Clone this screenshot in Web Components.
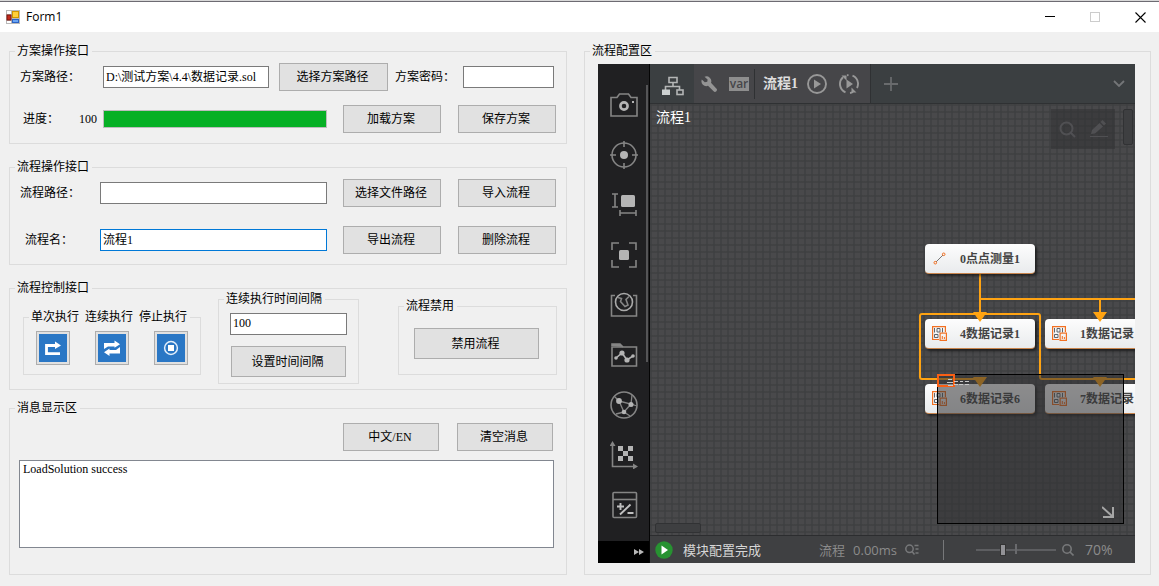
<!DOCTYPE html>
<html lang="zh-CN">
<head>
<meta charset="utf-8">
<title>Form1</title>
<style>
  html, body { margin: 0; min-height: 100%; }
  body {
    background: #f0f0f0; color: #000;
    font: 12px/14px "Liberation Serif", "Noto Sans CJK SC", serif;
  }
</style>
</head>
<body>
<app-window></app-window>

<script>
const controls = `
  *, *::before, *::after { box-sizing: border-box; }
  button, input, textarea { font: inherit; color: inherit; margin: 0; border-radius: 0; outline: 0; }
  button.win { height: 28px; padding: 0 2px 0 0; border: 1px solid #adadad; background: #e1e1e1; flex: none; white-space: nowrap; }
  button.win.tall { height: 31px; }
  input.box { height: 22px; min-width: 0; padding: 0 2px 2px; border: 1px solid #7a7a7a; background: #fff; }
  input.box.active { border-color: #0078d7; }
  .row { display: flex; align-items: center; }
  .grow { flex: 1; }
  .w98 { width: 98px; }
  label { flex: none; white-space: nowrap; }
  svg { display: block; }
`;

function define(name, css, html) {
  const tpl = document.createElement('template');
  tpl.innerHTML = `<style>${controls}${css}</style>${html}`;
  customElements.define(name, class extends HTMLElement {
    constructor() {
      super();
      this.attachShadow({ mode: 'open' }).append(tpl.content.cloneNode(true));
    }
  });
}

/* Titled frame */
define('group-box', `
  :host { display: flex; flex-direction: column; }
  fieldset { flex: 1; min-width: 0; margin: 0; padding: 0; border: 1px solid #dcdcdc; }
  legend { margin-left: 5px; padding: 0 3px 0 2px; line-height: 14px; white-space: nowrap; }
`, `<fieldset><legend><slot name="title"></slot></legend><slot></slot></fieldset>`);

define('title-bar', `
  :host { display: flex; align-items: center; height: 30px; background: #fff; padding-left: 6px;
          font-family: "Open Sans", "Noto Sans", sans-serif; }
  h1 { margin: 0 auto 0 6px; font-size: 12px; font-weight: 400; line-height: 16px; }
  button { width: 45px; height: 30px; padding: 0; border: 0; background: none; display: grid; place-items: center; }
  button.close { width: 38px; margin-left: 4px; }
`, `
  <svg width="14" height="14" viewBox="0 0 14 14"><rect width="14" height="14" fill="#b9b9b9"/><rect x="1" y="1" width="4" height="3" fill="#fff"/><rect x="1" y="11" width="4" height="2" fill="#fff"/><rect x="1" y="5" width="4" height="5" fill="#c22a1c" stroke="#7d150c"/><rect x="6.500" y="1.500" width="6" height="6" fill="#ffcf3b" stroke="#d09500"/><rect x="6.500" y="9.500" width="6" height="3" fill="#6aa5f4" stroke="#2c62c4"/></svg>
  <h1>Form1</h1>
  <button aria-label="最小化"><svg width="10" height="10"><path d="M0 4.500H10" stroke="#000"/></svg></button>
  <button aria-label="最大化" disabled><svg width="10" height="10"><rect x=".5" y=".5" width="9" height="9" fill="none" stroke="#ccc"/></svg></button>
  <button class="close" aria-label="关闭"><svg width="11" height="11"><path d="M.5 .5l10 10M10.500 .5l-10 10" stroke="#000" stroke-width="1.100"/></svg></button>
`);

define('solution-panel', `
  :host { display: block; }
  .rows { display: flex; flex-direction: column; gap: 14px; padding: 5px 10px 10px; }
  .path label:first-child { width: 83px; }
  .path .win { width: 109px; margin: 0 7px 0 10px; }
  .path .pwd { width: 68px; }
  .path .short { width: 91px; margin-right: 2px; }
  .load { padding-left: 3px; }
  .load label { width: 56px; }
  .load output { width: 24px; }
  .load .w98 { margin-left: 16px; }
  .load .w98 + .w98 { margin-left: 17px; }
  progress { appearance: none; flex: 1; min-width: 0; width: 0; height: 18px; border: 1px solid #bcbcbc; background: #e6e6e6; }
  progress::-webkit-progress-bar { background: #e6e6e6; }
  progress::-webkit-progress-value { background: #06b025; }
`, `
  <group-box><span slot="title">方案操作接口</span>
    <div class="rows">
      <div class="row path">
        <label for="p">方案路径：</label><input id="p" class="box grow" value="D:\\测试方案\\4.4\\数据记录.sol">
        <button class="win">选择方案路径</button>
        <label class="pwd" for="w">方案密码：</label><input id="w" class="box short">
      </div>
      <div class="row load">
        <label for="g">进度：</label><output>100</output><progress id="g" max="100" value="100"></progress>
        <button class="win w98">加载方案</button><button class="win w98">保存方案</button>
      </div>
    </div>
  </group-box>
`);

define('process-panel', `
  :host { display: block; }
  .rows { display: flex; flex-direction: column; gap: 19px; padding: 5px 10px 10px; }
  label { width: 80px; }
  .name label { padding-left: 5px; }
  .win { margin-left: 16px; }
  .win + .win { margin-left: 17px; }
`, `
  <group-box><span slot="title">流程操作接口</span>
    <div class="rows">
      <div class="row"><label for="p">流程路径：</label><input id="p" class="box grow">
        <button class="win w98">选择文件路径</button><button class="win w98">导入流程</button></div>
      <div class="row name"><label for="n">流程名：</label><input id="n" class="box grow active" value="流程1">
        <button class="win w98">导出流程</button><button class="win w98">删除流程</button></div>
    </div>
  </group-box>
`);

define('control-panel', `
  :host { display: block; }
  .groups { display: flex; align-items: flex-end; justify-content: space-between; margin-top: -3px; padding: 0 9px 5px 13px; }
  .run { width: 178px; margin-bottom: 9px; }
  .run .title { display: flex; gap: 6px; }
  .run .row { gap: 25px; padding: 7px 12px 9px; }
  .tool { width: 34px; height: 34px; padding: 2px; border: 1px solid #adadad; background: #e1e1e1; }
  .tool svg { background: #2a77c5; }
  .interval { width: 141px; margin-left: -22px; }
  .interval .stack { display: flex; flex-direction: column; gap: 11px; padding: 7px 11px 6px; }
  .interval .win { margin: 0 1px; }
  .disable { width: 159px; margin-bottom: 9px; }
  .disable .stack { display: flex; padding: 15px 17px 15px 15px; }
  .disable .win { flex: 1; }
`, `
  <group-box><span slot="title">流程控制接口</span>
    <div class="groups">
      <group-box class="run"><span slot="title" class="title"><span>单次执行</span><span>连续执行</span><span>停止执行</span></span>
        <div class="row">
          <button class="tool" aria-label="单次执行"><svg width="28" height="28" viewBox="0 0 28 28"><path d="M21 19.700H7.500V11.500H17" fill="none" stroke="#fff" stroke-width="2.800"/><path d="M16 7.500L22 11.500L16 15z" fill="#fff"/></svg></button>
          <button class="tool" aria-label="连续执行"><svg width="28" height="28" viewBox="0 0 28 28"><path d="M6 15V9H16.500V6.500L22 10.200L16.500 13.800V12.500H10zM22 13V19.500H11.500V22L6 18.200L11.500 14.600V16H18z" fill="#fff"/></svg></button>
          <button class="tool" aria-label="停止执行"><svg width="28" height="28" viewBox="0 0 28 28"><circle cx="14" cy="14" r="6.400" fill="none" stroke="#e3eefa" stroke-width="1.500"/><rect x="11" y="11" width="6" height="6" fill="#fff"/></svg></button>
        </div>
      </group-box>
      <group-box class="interval"><span slot="title">连续执行时间间隔</span>
        <div class="stack"><input class="box" aria-label="连续执行时间间隔" value="100"><button class="win tall">设置时间间隔</button></div>
      </group-box>
      <group-box class="disable"><span slot="title">流程禁用</span>
        <div class="stack"><button class="win tall">禁用流程</button></div>
      </group-box>
    </div>
  </group-box>
`);

define('message-panel', `
  :host { display: flex; flex-direction: column; }
  group-box { flex: 1; }
  .body { display: flex; flex-direction: column; gap: 9px; padding: 8px 12px 26px 9px; }
  .row { justify-content: flex-end; gap: 18px; padding-right: 1px; }
  .win { width: 96px; }
  textarea { display: block; width: 100%; height: 88px; padding: 1px 3px; border: 1px solid #828790; background: #fff; resize: none; }
`, `
  <group-box><span slot="title">消息显示区</span>
    <div class="body">
      <div class="row"><button class="win">中文/EN</button><button class="win">清空消息</button></div>
      <textarea aria-label="消息" readonly>LoadSolution success</textarea>
    </div>
  </group-box>
`);

/* Vertical strip of tool categories */
define('tool-strip', `
  :host { display: flex; flex-direction: column; width: 52px; background: #202022; border-right: 1px solid #050505; position: relative; }
  nav { flex: 1; display: flex; flex-direction: column; padding-top: 16px; }
  nav button { height: 50px; padding: 0; border: 0; background: none; display: grid; place-items: center; }
  svg { fill: none; stroke: #858585; stroke-width: 1.600; }
  .f { fill: #b4b4b4; stroke: none; }
  .bar { position: absolute; right: 1px; top: 21px; width: 2px; height: 277px; background: #555557; }
  .more { height: 22px; padding: 0 5px 0 0; border: 0; background: #000; display: flex; align-items: center; justify-content: flex-end; }
`, `
  <nav aria-label="工具">
    <button aria-label="采集"><svg width="28" height="28" viewBox="0 0 28 28"><path d="M1 6.500H7L9.500 3H18.500L21 6.500H27V25H1z"/><circle cx="14" cy="15" r="3.600" stroke="#b4b4b4" stroke-width="2.600"/><rect class="f" x="22" y="10" width="2" height="2"/></svg></button>
    <button aria-label="定位"><svg width="28" height="28" viewBox="0 0 28 28"><circle cx="14" cy="14" r="12"/><path d="M14 0V6M14 22V28M0 14H6M22 14H28"/><circle class="f" cx="14" cy="14" r="4"/></svg></button>
    <button aria-label="测量"><svg width="28" height="28" viewBox="0 0 28 28"><rect class="f" x="11" y="4" width="14" height="12" rx="1.500"/><path d="M2 3H8M5 3V16M2 16H8M10 19V25M10 22H26M26 19V25"/></svg></button>
    <button aria-label="识别"><svg width="28" height="28" viewBox="0 0 28 28"><path d="M2 9V2H9M19 2H26V9M26 19V26H19M9 26H2V19"/><rect class="f" x="9" y="9" width="10" height="10" rx="1.500"/></svg></button>
    <button aria-label="深度学习"><svg width="28" height="28" viewBox="0 0 28 28"><path d="M5 4.500H1.500V25H26.500V4.500H23"/><circle cx="14" cy="11" r="8.500" stroke="#aaa"/><path d="M8 6.500L11.500 7.500L10.500 10.500L15 15.500L18 14L16 8.500L19 5.500"/></svg></button>
    <button aria-label="标定"><svg width="28" height="28" viewBox="0 0 28 28"><path d="M2 6H26.500V25H2z"/><path d="M2 5V3H10L13 6" fill="#858585"/><path d="M6 17L12 12L17 19L23 15" stroke="#b4b4b4"/><g class="f"><circle cx="6" cy="17" r="1.800"/><circle cx="12" cy="12" r="2.600"/><circle cx="17" cy="19" r="2.600"/><circle cx="23" cy="15" r="1.800"/></g></svg></button>
    <button aria-label="对位"><svg width="28" height="28" viewBox="0 0 28 28"><circle cx="14" cy="14" r="13"/><path d="M9 10L21 13L14 21zM9 10L4 5M21 13L22 4M21 13L27 15M14 21L6 23M14 21L20 25" stroke-width="1.300"/><g class="f"><circle cx="9" cy="10" r="2.900"/><circle cx="21" cy="13.500" r="2.500"/><circle cx="14" cy="21" r="2.300"/></g></svg></button>
    <button aria-label="图像处理"><svg width="28" height="28" viewBox="0 0 28 28"><path d="M2.500 3V25.500H25"/><path d="M-.5 5L2.500 0L5.500 5zM23 22.500L28 25.500L23 28.500z" fill="#858585" stroke="none"/><path class="f" d="M8 5h5v5H8zM18 5h5v5h-5zM13 10h5v5h-5zM8 15h5v5H8zM18 15h5v5h-5z"/></svg></button>
    <button aria-label="运算"><svg width="28" height="28" viewBox="0 0 28 28"><rect x="3" y="1.500" width="23.500" height="25" rx="1"/><path d="M3 8.500H26.500"/><path d="M7 15.500H14M10.500 12V19M10 23.500L20.500 13.500M17.500 22H23.500" stroke="#c0c0c0" stroke-width="1.900"/></svg></button>
  </nav>
  <div class="bar"></div>
  <button class="more" aria-label="展开"><svg width="10" height="8" viewBox="0 0 10 8"><path d="M0 1L5 4L0 7zM5 1L10 4L5 7z" fill="#b8b8b8" stroke="none"/></svg></button>
`);

define('flow-toolbar', `
  :host { display: flex; height: 40px; background: #3b3f41; border-bottom: 1px solid #2f3133; color: #ddd; }
  button { padding: 0; border: 0; background: none; display: grid; place-items: center; }
  .tree { width: 44px; padding: 4px 0 0 1px; }
  .tab { display: flex; align-items: center; background: #464649; border-right: 1px solid #2f3133; }
  .wrench { width: 29px; }
  .var { width: 20px; height: 14px; background: #8e8e8e; color: #464649; font: 600 12px/12px "Open Sans", sans-serif; margin: 0 5px 0 6px; }
  .sep { width: 1px; height: 30px; background: #2f3133; }
  b { margin: 0 8px 0 8px; font-size: 14px; font-weight: 700; line-height: 20px; white-space: nowrap; }
  .tab .go { width: 22px; margin-right: 10px; }
  .add { width: 40px; }
  .down { width: 32px; margin-left: auto; }
`, `
  <button class="tree" aria-label="流程视图"><svg width="22" height="20" viewBox="0 0 22 20" fill="none" stroke="#b4b6b6" stroke-width="1.600"><path d="M7 1.500H15V6.500H7zM11 6.500V10.500M3.500 14V10.500H17.500V14"/><rect x="15" y="14" width="6" height="4.500"/><rect x="0" y="13.500" width="8" height="5.500" fill="#ccd0d0" stroke="none"/></svg></button>
  <div class="tab">
    <button class="wrench" aria-label="设置"><svg width="16" height="16" viewBox="0 0 16 16" fill="#949494"><path d="M3.500 .8A4.800 4.800 0 0 1 10 6.800L15.300 12.500A1.900 1.900 0 0 1 12.600 15.300L7 9.800A4.800 4.800 0 0 1 .8 3.600L3.800 6.300L6.300 5.800L6.600 3.500z"/></svg></button>
    <button class="var">var</button>
    <span class="sep"></span><b>流程1</b>
    <button class="go" aria-label="执行"><svg width="20" height="20" viewBox="0 0 20 20"><circle cx="10" cy="10" r="9" fill="none" stroke="#989898" stroke-width="1.900"/><path d="M7 5.500L14 10L7 14.500z" fill="#989898"/></svg></button>
    <button class="go" aria-label="循环执行"><svg width="20" height="20" viewBox="0 0 20 20"><path d="M6.500 18.300A9 9 0 0 1 4 3.300M8 1.300A9 9 0 0 1 9.500 1M19 9A9 9 0 0 1 18 14M13.500 1.700A9 9 0 0 1 19 9M11 19A9 9 0 0 0 14 18" fill="none" stroke="#989898" stroke-width="1.900"/><path d="M7.500 5.500L14 10L7.500 14.500zM2.500 1.500H7.500V6.500zM12.500 13.500V18.500H17.500z" fill="#989898"/></svg></button>
  </div>
  <button class="add" aria-label="新建流程"><svg width="14" height="14"><path d="M7 0V14M0 7H14" stroke="#696b6d" stroke-width="1.800"/></svg></button>
  <button class="down" aria-label="更多"><svg width="12" height="7" viewBox="0 0 12 7"><path d="M1 1L6 6L11 1" fill="none" stroke="#747678" stroke-width="1.800"/></svg></button>
`);

/* A step placed on the flow canvas; the icon comes in through its slot */
define('flow-node', `
  :host { position: absolute; display: flex; align-items: center; width: 110px; height: 30px; padding-left: 7px;
          border-radius: 4px; border-bottom: 1px solid #c8844c; background: linear-gradient(#fdfdfd, #e9ebed);
          box-shadow: 2px 2px 3px rgba(0,0,0,.55); color: #444; font-weight: 700; white-space: nowrap; box-sizing: border-box; }
  ::slotted(svg) { flex: none; margin-right: 13px; }
`, `<slot></slot>`);

const record = `<svg width="15" height="15" viewBox="0 0 15 15" fill="none"><path d="M7 13.500H.6V.6H13.400V6" stroke="#f37021" stroke-width="1.200"/><path d="M2.500 2V6.500M5 2.500H8V6H5zM10.500 2V6.500M2.500 8.500H6V11.500H2.500z" stroke="#5f666c"/><rect x="8.100" y="7.100" width="6.300" height="7.300" stroke="#f37021" stroke-width="1.200"/><path d="M10.300 10V13M12.400 11V13" stroke="#f37021"/></svg>`;

define('flow-canvas', `
  :host { display: block; position: relative; overflow: hidden;
    background-image: linear-gradient(rgba(62,63,65,.7) 2px, transparent 2px), linear-gradient(90deg, #414244 2px, #49494b 2px);
    background-size: 7px 7px; }
  h2 { margin: 0; padding: 4px 6px; font-size: 14px; line-height: 20px; font-weight: 400; color: #fff; }
  .wires, .heads { position: absolute; left: 0; top: 0; }
  .n0 { left: 275px; top: 140px; }
  .n4 { left: 275px; top: 215px; }
  .n1 { left: 395px; top: 215px; }
  .n6 { left: 275px; top: 280px; }
  .n7 { left: 395px; top: 280px; }
  .find { position: absolute; right: 20px; top: 5px; width: 64px; height: 40px; display: flex; background: rgba(48,48,50,.5); }
  .find button { flex: 1; padding: 0; border: 0; background: none; display: grid; place-items: center; }
  .vbar, .hbar { position: absolute; border: 1px solid #313234; border-radius: 2px; background: #3e3f41; }
  .vbar { right: 2px; top: 5px; width: 10px; height: 36px; }
  .hbar { left: 5px; bottom: 2px; width: 46px; height: 10px; }
  .mini { position: absolute; right: 11px; top: 270px; width: 187px; height: 150px; border: 1px solid #000; background: rgba(52,52,54,.56); }
  .view { position: absolute; left: -1px; top: -1px; width: 18px; height: 13px; border: 2px solid #f95f14; }
  .thumb { position: absolute; left: 9px; top: 3px; }
  .size { position: absolute; right: 9px; bottom: 5px; }
`, `
  <h2>流程1</h2>
  <svg class="wires" width="900" height="431" fill="none" stroke="#ffa312" stroke-width="2"><path d="M330 170V212M330 195H900M450 195V212M330 275H272Q270 275 270 273V212Q270 210 272 210H388Q390 210 390 212V273Q390 275 392 275H900"/></svg>
  <flow-node class="n0"><svg width="15" height="15" viewBox="0 0 15 15" fill="none"><path d="M4 11L11 4" stroke="#777"/><circle cx="3.300" cy="11.700" r="1.300" stroke="#f37021"/><circle cx="11.700" cy="3.300" r="1.300" stroke="#f37021"/></svg>0点点测量1</flow-node>
  <flow-node class="n4">${record}4数据记录1</flow-node>
  <flow-node class="n1">${record}1数据记录</flow-node>
  <flow-node class="n6">${record}6数据记录6</flow-node>
  <flow-node class="n7">${record}7数据记录</flow-node>
  <svg class="heads" width="485" height="431" fill="#ffa312"><path d="M323 208H337L330 218zM443 208H457L450 218zM323 273H337L330 283zM443 273H457L450 283z"/></svg>
  <div class="find">
    <button aria-label="查找"><svg width="17" height="17" viewBox="0 0 17 17" fill="none" stroke="#505053" stroke-width="2"><circle cx="7.500" cy="7.500" r="6"/><path d="M12 12L16 16"/></svg></button>
    <button aria-label="编辑"><svg width="18" height="18" viewBox="0 0 18 18" fill="#505053"><path d="M1 14L2 10L9.500 3L13 6.500L5 13.500zM10.500 2L12.500 0L16 3.500L14 5.500zM0 16H18V17H0z"/></svg></button>
  </div>
  <div class="vbar"></div><div class="hbar"></div>
  <div class="mini">
    <div class="view"></div>
    <svg class="thumb" width="24" height="9" fill="#c9c9c9"><path d="M1 1H5V2H1zM0 4H6V5H0zM1 7H6V8H1zM7 3H11V4H7zM7 6H11V7H7zM13 3H16V4H13zM12 6H16V7H12zM18 3H22V4H18zM18 6H22V7H18z"/></svg>
    <svg class="size" width="12" height="12" viewBox="0 0 12 12" fill="none" stroke="#a6a6a6" stroke-width="2"><path d="M0 1L10 10M1 11H11V1"/></svg>
  </div>
`);

define('flow-status', `
  :host { display: flex; align-items: center; height: 28px; padding: 0 22px 0 5px; border-top: 1px solid #2c2d2f; background: #3f4042;
          color: #8b8b8b; font: 13px/20px "Open Sans", "Noto Sans CJK SC", sans-serif; white-space: nowrap; }
  .state { margin: 0 auto 0 10px; color: #d6d6d6; }
  .time { margin-left: 8px; }
  .detail { margin: 0 24px 0 8px; }
  .sep { width: 1px; height: 20px; background: #77787a; margin-right: 32px; }
  input { appearance: none; width: 80px; height: 12px; margin-right: 6px; background:
    linear-gradient(#696a6d, #696a6d) 39px 0 / 2px 10px no-repeat, linear-gradient(#5d5e61, #5d5e61) 0 5px / 100% 2px no-repeat; }
  input::-webkit-slider-thumb { appearance: none; width: 6px; height: 12px; background: #929296; border: 1px solid #333; }
  .zoom { width: 28px; margin-left: 11px; font-size: 14px; }
`, `
  <svg width="18" height="18" viewBox="0 0 18 18"><circle cx="9" cy="9" r="8.700" fill="#279231"/><path d="M6.500 4.500L13 9L6.500 13.500z" fill="#fff"/></svg>
  <span class="state">模块配置完成</span>
  <span>流程</span><span class="time">0.00ms</span>
  <svg class="detail" width="14" height="11" viewBox="0 0 14 11" fill="none" stroke="#77787a" stroke-width="1.500"><circle cx="4.500" cy="4.800" r="3.700"/><path d="M7 7.500L9.500 10.500M9.500 1.500H13.500M10.500 5H13.500M10.500 9H13.500"/></svg>
  <span class="sep"></span>
  <input type="range" min="0" max="100" value="32" aria-label="缩放">
  <svg width="12" height="12" viewBox="0 0 12 12" fill="none" stroke="#77787a" stroke-width="1.600"><circle cx="5" cy="5" r="4.200"/><path d="M8 8L11.500 11.500"/></svg>
  <span class="zoom">70%</span>
`);

define('flow-editor', `
  :host { display: flex; flex-direction: column; }
  group-box { flex: 1; }
  .frame { display: flex; margin: 6px 15px 11px 13px; background: #202022; }
  .main { flex: 1; min-width: 0; display: flex; flex-direction: column; }
  flow-canvas { height: 431px; }
`, `
  <group-box><span slot="title">流程配置区</span>
    <div class="frame">
      <tool-strip></tool-strip>
      <div class="main"><flow-toolbar></flow-toolbar><flow-canvas></flow-canvas><flow-status></flow-status></div>
    </div>
  </group-box>
`);

define('app-window', `
  :host { display: block; border-top: 1px solid #d8d8d8; }
  title-bar { border-top: 1px solid #6d6b72; height: 31px; }
  main { display: grid; grid-template-columns: 558fr 567fr; gap: 17px; padding: 12px 8px 11px 9px; }
  .left { display: flex; flex-direction: column; gap: 16px; min-width: 0; }
  .lower { display: flex; flex-direction: column; gap: 11px; flex: 1; }
  message-panel { flex: 1; }
`, `
  <title-bar></title-bar>
  <main>
    <div class="left">
      <solution-panel></solution-panel>
      <process-panel></process-panel>
      <div class="lower"><control-panel></control-panel><message-panel></message-panel></div>
    </div>
    <flow-editor></flow-editor>
  </main>
`);
</script>
</body>
</html>
